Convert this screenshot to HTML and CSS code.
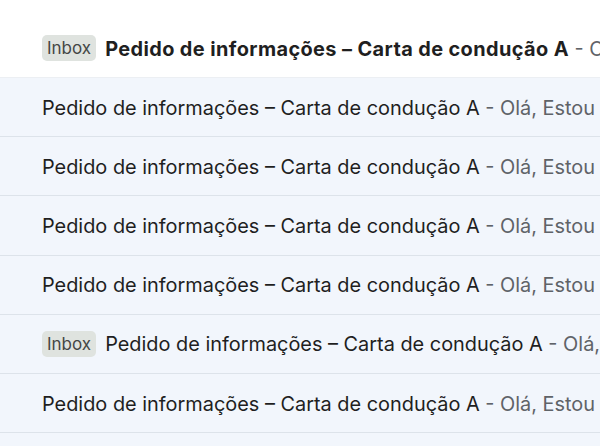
FILE: index.html
```html
<!DOCTYPE html>
<html lang="pt">
<head>
<meta charset="utf-8">
<link rel="stylesheet" href="styles.css">
</head>
<body>
<div class="list">
  <div class="row unread">
    <span class="badge">Inbox</span>
    <span class="line"><span class="subject">Pedido de informações – Carta de condução A</span><span class="snippet"> - Olá, Estou</span></span>
  </div>
  <div class="row read">
    <span class="line"><span class="subject">Pedido de informações – Carta de condução A</span><span class="snippet"> - Olá, Estou</span></span>
  </div>
  <div class="row read">
    <span class="line"><span class="subject">Pedido de informações – Carta de condução A</span><span class="snippet"> - Olá, Estou</span></span>
  </div>
  <div class="row read">
    <span class="line"><span class="subject">Pedido de informações – Carta de condução A</span><span class="snippet"> - Olá, Estou</span></span>
  </div>
  <div class="row read">
    <span class="line"><span class="subject">Pedido de informações – Carta de condução A</span><span class="snippet"> - Olá, Estou</span></span>
  </div>
  <div class="row read">
    <span class="badge">Inbox</span>
    <span class="line"><span class="subject">Pedido de informações – Carta de condução A</span><span class="snippet"> - Olá, Estou</span></span>
  </div>
  <div class="row read">
    <span class="line"><span class="subject">Pedido de informações – Carta de condução A</span><span class="snippet"> - Olá, Estou</span></span>
  </div>
</div>
</body>
</html>
```
FILE: styles.css
```css
html, body {
  margin: 0;
  padding: 0;
  background: #ffffff;
  overflow: hidden;
}
body {
  width: 600px;
  height: 446px;
  font-family: Inter, Roboto, "Liberation Sans", sans-serif;
  color: #1f1f1f;
}
.list {
  box-sizing: border-box;
  height: 446px;
  padding-top: 19px;
  background: linear-gradient(#ffffff 0, #ffffff 78px, #f2f6fc 78px);
}
.row {
  box-sizing: border-box;
  height: 59.17px;
  display: flex;
  align-items: center;
  padding-left: 42px;
  white-space: nowrap;
  overflow: hidden;
  font-size: 19.9px;
  border-bottom: 1px solid #dde3ea;
}
.row.unread {
  background: #ffffff;
  border-bottom-color: #eceff3;
}
.row.read {
  background: #f2f6fc;
}
.line {
  flex: none;
  padding-top: 1px;
}
.unread .subject {
  font-weight: 700;
  letter-spacing: 0.4px;
}
.badge {
  flex: none;
  background: #dfe3df;
  color: #444746;
  font-size: 17px;
  line-height: 26px;
  padding: 0 5px;
  border-radius: 5px;
  margin-right: 9px;
}
.snippet {
  color: #5f6368;
}
```
